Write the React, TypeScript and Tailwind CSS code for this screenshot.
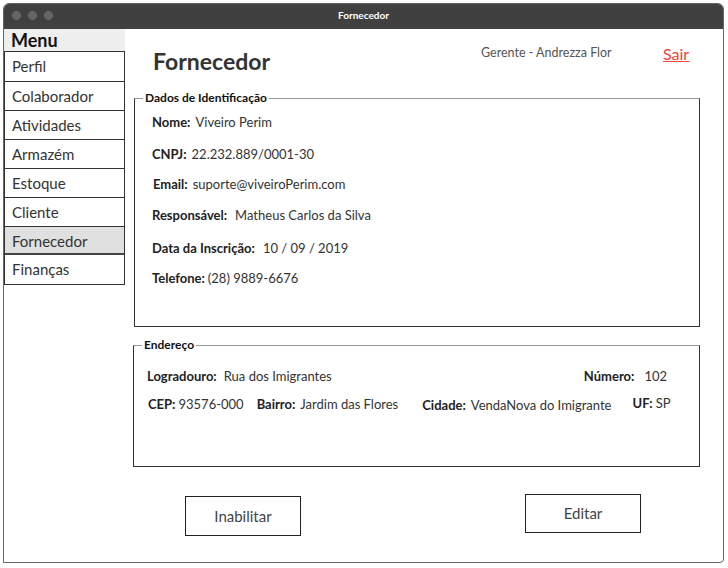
import React from "react";

const font = { fontFamily: "Lato, 'Open Sans', sans-serif" };

function Field({ label, value, className = "" }: { label: string; value: string; className?: string }) {
  return (
    <div className={"flex items-baseline text-[13px] text-[#333] " + className}>
      <span className="font-bold text-[#222]">{label}</span>
      <span className="ml-[5px]">{value}</span>
    </div>
  );
}

export default function App() {
  const items = ["Perfil", "Colaborador", "Atividades", "Armazém", "Estoque", "Cliente", "Fornecedor", "Finanças"];
  return (
    <div className="w-[728px] h-[568px] bg-white pt-[3px] pl-[3px]" style={font}>
      <div className="w-[721px] h-[560px] border border-[#666] rounded-t-[6px] rounded-br-[4px] flex flex-col overflow-hidden">
        <div className="h-[25px] bg-[#404040] flex items-center relative shrink-0 pb-[2px]">
          <div className="flex gap-[7px] pl-[8px]">
            <span className="w-[9px] h-[9px] rounded-full bg-[#666]" />
            <span className="w-[9px] h-[9px] rounded-full bg-[#666]" />
            <span className="w-[9px] h-[9px] rounded-full bg-[#666]" />
          </div>
          <div className="absolute inset-0 flex items-center justify-center text-white text-[10px] font-bold pb-[3px]">Fornecedor</div>
        </div>
        <div className="flex flex-1">
          <div className="w-[121px] shrink-0">
            <div className="h-[22px] bg-[#eeeeee] pl-[7px] text-[18px] font-bold text-[#111] leading-[22px] w-[121px]">Menu</div>
            <div className="border border-[#333]">
              {items.map((it, i) => (
                <div
                  key={it}
                  className={
                    "h-[29px] pl-[7px] text-[15px] leading-[28px] text-[#333] " +
                    (i > 0 ? "border-t border-[#333] " : "") +
                    (it === "Fornecedor" ? "bg-[#e0e0e0] border-b-2 border-b-[#444] " : "") +
                    (it === "Finanças" ? "border-t-0 " : "")
                  }
                >
                  {it}
                </div>
              ))}
            </div>
          </div>
          <div className="flex-1 flex flex-col pl-[8px] pr-[23px]">
            <div className="h-[60px] flex relative">
              <div className="pl-[20px] pt-[15px] text-[23px] font-bold text-[#333]">Fornecedor</div>
              <div className="absolute left-[348px] top-[15px] text-[12.5px] text-[#555]">Gerente - Andrezza Flor</div>
              <div className="absolute left-[530px] top-[13px] text-[16px] text-[#f44336] underline">Sair</div>
            </div>
            <fieldset className="h-[238px] border border-[#333] border-t-[#999] px-[12px] pt-0 m-0 ml-[1px]">
              <legend className="ml-[-4px] px-[2px] text-[12px] font-bold text-[#111]">Dados de Identificação</legend>
              <div className="flex flex-col pl-[5px] pt-[6px]">
                <Field label="Nome:" value="Viveiro Perim" className="h-[32px]" />
                <Field label="CNPJ:" value="22.232.889/0001-30" className="h-[30px]" />
                <Field label="Email:" value="suporte@viveiroPerim.com" className="h-[31px] pl-[1px]" />
                <Field label="Responsável:" value="Matheus Carlos da Silva" className="h-[33px] [&>span:last-child]:ml-[8px]" />
                <Field label="Data da Inscrição:" value="10 / 09 / 2019" className="h-[30px] [&>span:last-child]:ml-[8px]" />
                <Field label="Telefone:" value="(28) 9889-6676" className="h-[30px] [&>span:last-child]:ml-[3px]" />
              </div>
            </fieldset>
            <fieldset className="mt-[9px] h-[131px] border border-[#333] border-t-[#999] pl-[13px] pr-[12px] pt-0 m-0">
              <legend className="ml-[-5px] px-[2px] text-[12px] font-bold text-[#111]">Endereço</legend>
              <div className="flex flex-col pt-[13px]">
                <div className="flex justify-between h-[28px] pr-[20px]">
                  <Field label="Logradouro:" value="Rua dos Imigrantes" className="[&>span:last-child]:ml-[7px]" />
                  <Field label="Número:" value="102" className="[&>span:last-child]:ml-[10px]" />
                </div>
                <div className="flex h-[28px] items-start">
                  <Field label="CEP:" value="93576-000" className="pl-[1px] [&>span:last-child]:ml-[3px]" />
                  <Field label="Bairro:" value="Jardim das Flores" className="ml-[13px]" />
                  <Field label="Cidade:" value="VendaNova do Imigrante" className="ml-[24px] mt-[1px]" />
                  <Field label="UF:" value="SP" className="ml-[21px] -mt-[1px] [&>span:last-child]:ml-[3px]" />
                </div>
              </div>
            </fieldset>
            <div className="flex justify-between pl-[52px] pr-[59px] mt-[27px]">
              <div className="w-[116px] h-[40px] border border-[#222] flex items-center justify-center text-[15px] text-[#444] mt-[2px]">Inabilitar</div>
              <div className="w-[116px] h-[39px] border border-[#222] flex items-center justify-center text-[15px] text-[#444]">Editar</div>
            </div>
          </div>
        </div>
      </div>
    </div>
  );
}
